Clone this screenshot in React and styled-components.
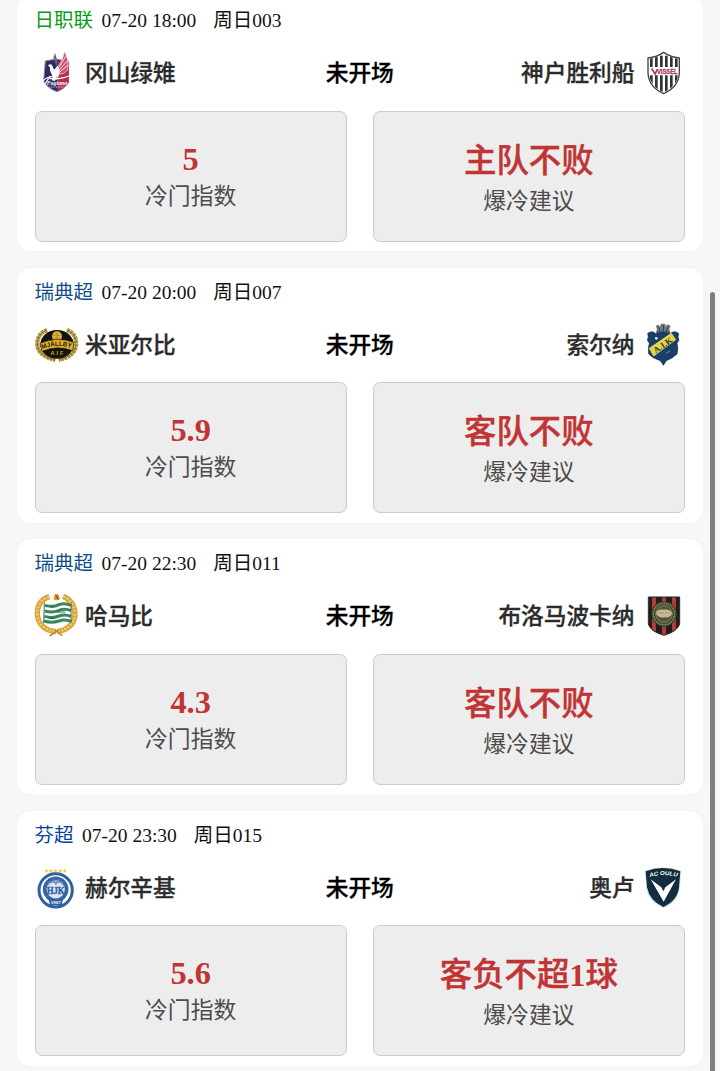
import React from 'react';
import styled, { createGlobalStyle } from 'styled-components';

const GlobalStyle = createGlobalStyle`
  * {
    box-sizing: border-box;
  }

  body {
    margin: 0;
    background: #f7f7f7;
    overflow: hidden;
    font-family: 'Liberation Serif', 'Noto Sans CJK SC', serif;
  }
`;

const Page = styled.main`
  height: 1071px;
  padding: 0 17px 0 16.5px;
  overflow: hidden;
  background: #f7f7f7;
`;

const MatchList = styled.div`
  display: flex;
  flex-direction: column;
  gap: 16.5px;
  margin-top: -4px;
`;

const Card = styled.section`
  height: 255px;
  flex-shrink: 0;
  padding: 11px 18px 0;
  border-radius: 14px;
  background: #fff;
  box-shadow: 0 0 8px rgba(0, 0, 0, 0.025);
`;

const MatchInfo = styled.div`
  display: flex;
  height: 28px;
  line-height: 28px;
  font-size: 19.5px;
  color: #111;
  white-space: pre;
`;

const League = styled.span`
  color: ${(props) => props.$color};
  margin-right: 8.5px;
`;

const MatchTime = styled.span`
  margin-right: 17px;
`;

const Teams = styled.div`
  display: grid;
  grid-template-columns: 1fr auto 1fr;
  align-items: center;
  height: 42px;
  margin-top: 17px;
`;

const Team = styled.div`
  display: flex;
  align-items: center;
  justify-content: ${(props) => (props.$away ? 'flex-end' : 'flex-start')};
  gap: 8.5px;
`;

const TeamName = styled.span`
  padding-top: 2px;
  font-size: 22.7px;
  font-weight: 500;
  line-height: 32px;
  color: #2b2b2b;
  -webkit-text-stroke: 0.3px currentColor;
`;

const Status = styled(TeamName)`
  color: #000;
`;

const Logo = styled.svg`
  display: block;
  width: 42px;
  height: 42px;
  flex-shrink: 0;
  overflow: visible;
`;

const Panels = styled.div`
  display: grid;
  grid-template-columns: 1fr 1fr;
  gap: 26px;
  margin-top: 16.5px;
`;

const Panel = styled.div`
  display: flex;
  flex-direction: column;
  align-items: center;
  justify-content: center;
  height: 131px;
  border: 1.5px solid #cbcbcb;
  border-radius: 7px;
  background: #ededed;
`;

const IndexValue = styled.strong`
  font-size: 32.4px;
  font-weight: 700;
  line-height: 39px;
  color: #c13434;
`;

const Advice = styled(IndexValue)`
  padding-top: 4px;
  font-weight: 500;
  line-height: 45px;
  -webkit-text-stroke: 0.4px currentColor;
`;

const Digit = styled.span`
  font-weight: 700;
  -webkit-text-stroke: 0;
`;

const PanelLabel = styled.span`
  padding-top: 2px;
  font-size: 22.8px;
  line-height: 32px;
  color: #4c4c4c;
`;

const ScrollThumb = styled.div`
  position: fixed;
  top: 292px;
  right: 5px;
  bottom: -8px;
  width: 5px;
  border-radius: 3px;
  background: #7f7f7f;
`;

const FagianoLogo = () => (
  <Logo viewBox="15 21 126 126">
    <path d="M46 48 L78 42 L116 50 V112 Q106 130 81 140 Q52 130 41 108 Z" fill="#2c2d62" stroke="#8c8794" strokeWidth="3" />
    <path d="M84 50 L116 50 V110 Q106 128 82 138 Z" fill="#b72b51" />
    <path d="M103 20 Q120 48 112 76 Q103 88 88 88 L82 64 Q97 52 103 20Z" fill="#d2506e" stroke="#f6dfe4" strokeWidth="2" />
    <path d="M88 66 L107 34 M89 73 L112 48 M90 80 L114 60" stroke="#fff" strokeWidth="2.5" />
    <path d="M75 24 L83 50 L79 62 L70 38Z" fill="#686789" />
    <path d="M54 62 Q61 54 67 62 L72 74 L83 62 Q92 72 88 86 Q78 94 75 108 L66 106 Q70 94 63 84 Q58 75 60 67Z" fill="#fff" />
    <path d="M38 108 Q56 92 78 94 M50 98 Q82 108 124 90 M60 94 L46 116 M86 90 L78 104" fill="none" stroke="#fff" strokeWidth="3.5" />
    <text x="81" y="119" textAnchor="middle" fontSize="16" fontWeight="700" fontStyle="italic" fill="#fff" textLength="62" lengthAdjust="spacingAndGlyphs">Fagiano</text>
    <path d="M58 126 H106" stroke="#c9c1d5" strokeWidth="3" strokeDasharray="3 2" />
  </Logo>
);

const VisselLogo = () => (
  <Logo viewBox="24 21 126 126">
    <clipPath id="vissel">
      <path d="M42 42 Q66 38 86 25 Q106 38 130 42 V84 Q128 123 86 142 Q44 123 42 84Z" />
    </clipPath>
    <path d="M39 39 Q66 36 86 22 Q106 36 133 39 V84 Q131 126 86 146 Q41 126 39 84Z" fill="#fff" stroke="#444" strokeWidth="4" />
    <g clipPath="url(#vissel)">
      <path d="M49 36V140 M64 34V140 M79 32V146 M94 32V146 M109 34V140 M124 36V140" stroke="#303331" strokeWidth="8" />
      <path d="M40 66 H132 V91 H40Z" fill="#fff" />
    </g>
    <path d="M50 70 L60 87 L67 73" fill="none" stroke="#b23658" strokeWidth="5" />
    <text x="66" y="86" fontFamily="Liberation Sans" fontSize="19" fontWeight="700" fill="#a43855" stroke="#a43855" strokeWidth="0.8" textLength="62" lengthAdjust="spacingAndGlyphs">VISSEL</text>
  </Logo>
);

const MjallbyLogo = () => (
  <Logo viewBox="21 18 126 126">
    <g fill="none" stroke="#b2963b" strokeWidth="13">
      <path d="M57 36 Q26 48 28 82 Q32 114 82 126" strokeDasharray="9 1.5" />
      <path d="M117 36 Q147 48 144 82 Q141 114 92 126" strokeDasharray="9 1.5" />
    </g>
    <g fill="none" stroke="#6f5b20" strokeWidth="2">
      <path d="M57 36 Q26 48 28 82 Q32 114 82 126" />
      <path d="M117 36 Q147 48 144 82 Q141 114 92 126" />
    </g>
    <ellipse cx="87" cy="79" rx="50" ry="43" fill="#15130d" />
    <circle cx="87" cy="55" r="15" fill="#dfb338" />
    <path d="M76 52 H98 M87 42 V68 M78 61 H96" stroke="#a57c21" strokeWidth="2" />
    <path d="M36 76 Q86 54 138 73 L134 98 Q87 80 42 100Z" fill="#e0b22f" stroke="#211b0c" strokeWidth="2" />
    <path id="mjallbyCurve" d="M43 93 Q87 75 133 91" fill="none" />
    <text fontFamily="Liberation Sans" fontSize="19" fontWeight="700" fill="#1b170c">
      <textPath href="#mjallbyCurve" textLength="88" lengthAdjust="spacingAndGlyphs">MJÄLLBY</textPath>
    </text>
    <text x="90" y="110" textAnchor="middle" fontFamily="Liberation Sans" fontSize="17" fontWeight="700" letterSpacing="6" fill="#cda839">AIF</text>
  </Logo>
);

const AikLogo = () => (
  <Logo viewBox="24 18 126 126">
    <path d="M62 46 L66 34 L62 23 L71 20 L74 26 L78 17 H90 L93 24 L98 19 L107 23 L103 34 L107 46Z" fill="#727b86" />
    <path d="M70 26 L75 39 M85 20 V40 M100 25 L94 40 M66 42 H103" stroke="#303d4c" strokeWidth="3" />
    <path d="M38 46 Q52 36 62 47 Q84 40 106 47 Q116 36 131 46 L129 57 L132 66 L126 76 Q131 90 126 108 Q113 121 94 128 L85 142 L76 128 Q52 121 41 108 Q38 90 43 76 L37 66 L40 57Z" fill="#193e68" stroke="#123150" strokeWidth="2" />
    <path d="M43 91 L109 46 L122 65 L56 114Z" fill="#ead337" stroke="#f8eda0" strokeWidth="2" />
    <text x="84" y="90" textAnchor="middle" transform="rotate(-35 84 82)" fontFamily="Liberation Serif" fontSize="26" fontWeight="700" fill="#203b4b" textLength="64" lengthAdjust="spacingAndGlyphs">A.I.K</text>
    <circle cx="64" cy="61" r="4" fill="#eef0e4" />
    <path d="M93 106 l12 -7" stroke="#6989a5" strokeWidth="3" />
  </Logo>
);

const HammarbyLogo = () => (
  <Logo viewBox="21 21 126 126">
    <g fill="none">
      <path d="M64 26 Q26 38 28 82 Q35 126 84 131 M105 25 Q141 40 141 82 Q136 122 88 131" stroke="#d6a238" strokeWidth="16" />
      <path d="M64 26 Q26 38 28 82 Q35 126 84 131 M105 25 Q141 40 141 82 Q136 122 88 131" stroke="#f0ca6c" strokeWidth="8" strokeDasharray="7 4" />
      <path d="M80 126 L103 143 M91 126 L65 144" stroke="#c48b28" strokeWidth="5" />
    </g>
    <path d="M49 47 Q75 54 93 45 Q110 38 129 47 V104 Q110 96 93 103 Q72 111 46 101Z" fill="#fff" />
    <g fill="none" stroke="#37865d" strokeWidth="9">
      <path d="M51 52 Q75 59 93 50 Q110 43 129 52" />
      <path d="M50 69 Q74 76 93 67 Q110 60 129 68" />
      <path d="M49 85 Q73 92 93 84 Q110 77 129 85" />
      <path d="M48 99 Q72 106 93 99 Q110 92 129 100" />
    </g>
    <path d="M49 44 L47 105 M129 46 V104 M68 57 H79 M88 72 H112 M62 91 H78" fill="none" stroke="#294e3b" strokeWidth="2.5" />
    <path d="M77 31 L80 19 H91 L95 31 L92 37 H80Z" fill="#d39b2d" />
    <path d="M83 20 L91 34" stroke="#83251f" strokeWidth="3" />
  </Logo>
);

const BrommaLogo = () => (
  <Logo viewBox="24 21 126 126">
    <clipPath id="bromma">
      <path d="M40 27 H134 V108 Q128 130 87 142 Q45 130 40 108Z" />
    </clipPath>
    <g clipPath="url(#bromma)">
      <path d="M38 24 H136 V144 H38Z" fill="#231e1b" />
      <path d="M57 24V144 M87 24V144 M117 24V144" stroke="#b23c3a" strokeWidth="12" />
    </g>
    <path d="M40 27 H134 V108 Q128 130 87 142 Q45 130 40 108Z" fill="none" stroke="#28231f" strokeWidth="3" />
    <circle cx="87" cy="78" r="38" fill="#38412b" />
    <circle cx="87" cy="78" r="32" fill="none" stroke="#87905f" strokeWidth="5" strokeDasharray="4 2" />
    <circle cx="87" cy="78" r="25" fill="#53563a" stroke="#ad9f75" strokeWidth="2" />
    <path d="M63 75 Q68 63 86 65 Q105 63 111 75 Q108 90 88 88 Q68 90 63 75Z" fill="#cbb894" />
    <path d="M71 75 H103" stroke="#9b8665" strokeWidth="3" strokeDasharray="7 2" />
  </Logo>
);

const HjkLogo = () => (
  <Logo viewBox="21 21 126 126">
    <text x="83" y="38" textAnchor="middle" fontFamily="DejaVu Sans" fontSize="19" fill="#ead42f" textLength="72">★★★★★</text>
    <circle cx="83" cy="91" r="50" fill="#fff" stroke="#315f9f" strokeWidth="9" />
    <circle cx="83" cy="88" r="33" fill="#dce7f3" stroke="#3465a5" strokeWidth="11" />
    <path d="M58 78 Q82 48 109 78 M62 67 H105 M76 55 L83 75 L94 56" fill="none" stroke="#688fbe" strokeWidth="3" />
    <text x="83" y="102" textAnchor="middle" fontSize="31" fontWeight="700" fill="#2d5c9c" stroke="#2d5c9c" textLength="54" lengthAdjust="spacingAndGlyphs">HJK</text>
    <path d="M62 117 H105 L101 136 H66Z" fill="#315f9f" />
    <text x="83" y="131" textAnchor="middle" fontSize="15" fontWeight="700" fill="#fff">1907</text>
  </Logo>
);

const OuluLogo = () => (
  <Logo viewBox="24 21 126 126">
    <path d="M29 32 Q84 11 139 32 L135 83 Q130 127 85 144 Q41 127 33 83Z" fill="#d6e4e9" />
    <path d="M32 34 Q84 14 136 34 L132 82 Q127 123 85 141 Q44 123 36 82Z" fill="#112d3e" />
    <path id="ouluCurve" d="M44 51 Q85 39 128 51" fill="none" />
    <text fontFamily="Liberation Sans" fontSize="17" fontWeight="700" fontStyle="italic" fill="#fff">
      <textPath href="#ouluCurve" textLength="84" lengthAdjust="spacingAndGlyphs">AC OULU</textPath>
    </text>
    <path d="M47 58 L79 82 L85 94 L91 82 L123 58 L86 125Z" fill="#fff" />
  </Logo>
);

const matches = [
  {
    league: '日职联',
    color: '#079b18',
    time: '07-20 18:00',
    number: '周日003',
    home: '冈山绿雉',
    away: '神户胜利船',
    HomeLogo: FagianoLogo,
    AwayLogo: VisselLogo,
    index: '5',
    advice: '主队不败',
  },
  {
    league: '瑞典超',
    color: '#104e86',
    time: '07-20 20:00',
    number: '周日007',
    home: '米亚尔比',
    away: '索尔纳',
    HomeLogo: MjallbyLogo,
    AwayLogo: AikLogo,
    index: '5.9',
    advice: '客队不败',
  },
  {
    league: '瑞典超',
    color: '#104e86',
    time: '07-20 22:30',
    number: '周日011',
    home: '哈马比',
    away: '布洛马波卡纳',
    HomeLogo: HammarbyLogo,
    AwayLogo: BrommaLogo,
    index: '4.3',
    advice: '客队不败',
  },
  {
    league: '芬超',
    color: '#0b3fa0',
    time: '07-20 23:30',
    number: '周日015',
    home: '赫尔辛基',
    away: '奥卢',
    HomeLogo: HjkLogo,
    AwayLogo: OuluLogo,
    index: '5.6',
    advice: <>客负不超<Digit>1</Digit>球</>,
  },
];

const MatchCard = ({ match }) => {
  const { HomeLogo, AwayLogo } = match;

  return (
    <Card>
      <MatchInfo>
        <League $color={match.color}>{match.league}</League>
        <MatchTime>{match.time}</MatchTime>
        <span>{match.number}</span>
      </MatchInfo>
      <Teams>
        <Team>
          <HomeLogo />
          <TeamName>{match.home}</TeamName>
        </Team>
        <Status>未开场</Status>
        <Team $away>
          <TeamName>{match.away}</TeamName>
          <AwayLogo />
        </Team>
      </Teams>
      <Panels>
        <Panel>
          <IndexValue>{match.index}</IndexValue>
          <PanelLabel>冷门指数</PanelLabel>
        </Panel>
        <Panel>
          <Advice>{match.advice}</Advice>
          <PanelLabel>爆冷建议</PanelLabel>
        </Panel>
      </Panels>
    </Card>
  );
};

const App = () => (
  <>
    <GlobalStyle />
    <Page>
      <MatchList>
        {matches.map((match) => (
          <MatchCard key={match.number} match={match} />
        ))}
      </MatchList>
    </Page>
    <ScrollThumb />
  </>
);

export default App;
